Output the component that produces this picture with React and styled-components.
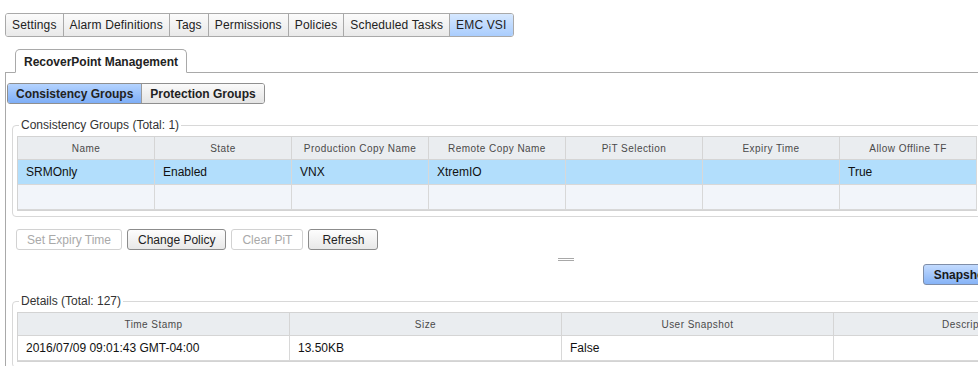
import React from 'react';
import styled, { createGlobalStyle, css } from 'styled-components';

const GlobalStyle = createGlobalStyle`
  html, body {
    margin: 0;
    padding: 0;
    background: #ffffff;
    overflow: hidden;
  }
  body {
    font-family: "Liberation Sans", Arial, sans-serif;
    font-size: 12px;
    color: #222;
  }
`;

const topTabs = ['Settings', 'Alarm Definitions', 'Tags', 'Permissions', 'Policies', 'Scheduled Tasks', 'EMC VSI'];

const groupColumns = ['Name', 'State', 'Production Copy Name', 'Remote Copy Name', 'PiT Selection', 'Expiry Time', 'Allow Offline TF'];
const groupRows = [
  { selected: true, cells: ['SRMOnly', 'Enabled', 'VNX', 'XtremIO', '', '', 'True'] },
  { selected: false, cells: ['', '', '', '', '', '', ''] },
];

const detailColumns = ['Time Stamp', 'Size', 'User Snapshot', 'Description'];
const detailRows = [
  { selected: false, cells: ['2016/07/09 09:01:43 GMT-04:00', '13.50KB', 'False', ''] },
];

const App = () => {
  return (
    <>
      <GlobalStyle />
      <Page>
        <TopBar>
          {topTabs.map((t) => (
            <TopTab key={t} active={t === 'EMC VSI'}>{t}</TopTab>
          ))}
        </TopBar>

        <TabStrip>
          <PanelTab>RecoverPoint Management</PanelTab>
        </TabStrip>

        <Panel>
          <Toggle>
            <ToggleButton active>Consistency Groups</ToggleButton>
            <ToggleButton>Protection Groups</ToggleButton>
          </Toggle>

          <Group gapTop={14}>
            <Legend>Consistency Groups (Total: 1)</Legend>
            <Grid cols={groupColumns.length} colWidth={137}>
              {groupColumns.map((c) => (
                <HeadCell key={c}>{c}</HeadCell>
              ))}
              {groupRows.map((row, i) =>
                row.cells.map((cell, j) => (
                  <Cell key={`${i}-${j}`} selected={row.selected} alt={!row.selected}>
                    {cell}
                  </Cell>
                ))
              )}
            </Grid>
          </Group>

          <ButtonRow>
            <Button disabled>Set Expiry Time</Button>
            <Button>Change Policy</Button>
            <Button disabled>Clear PiT</Button>
            <Button>Refresh</Button>
          </ButtonRow>

          <Splitter />

          <SnapshotBar>
            <BlueButton>Snapshots</BlueButton>
          </SnapshotBar>

          <Group wide gapTop={9}>
            <Legend>Details (Total: 127)</Legend>
            <Grid cols={detailColumns.length} colWidth={272}>
              {detailColumns.map((c) => (
                <HeadCell key={c}>{c}</HeadCell>
              ))}
              {detailRows.map((row, i) =>
                row.cells.map((cell, j) => (
                  <Cell key={`${i}-${j}`}>{cell}</Cell>
                ))
              )}
            </Grid>
          </Group>
        </Panel>
      </Page>
    </>
  );
};

const Page = styled.div`
  padding: 13px 0 0 5px;
  width: 1200px;
`;

const TopBar = styled.div`
  display: inline-flex;
  height: 24px;
  box-sizing: border-box;
  border: 1px solid #a9a9a9;
  border-radius: 3px;
  overflow: hidden;
`;

const TopTab = styled.div`
  display: flex;
  align-items: center;
  padding: 0 6px;
  font-size: 12px;
  letter-spacing: 0.15px;
  color: #222;
  background: linear-gradient(#fbfbfb, #e9e9e9);
  & + & {
    border-left: 1px solid #a9a9a9;
  }
  ${(p) => p.active && css`
    background: linear-gradient(#d6e8ff, #aacdfd);
  `}
`;

const TabStrip = styled.div`
  display: flex;
  margin-top: 12px;
  padding-left: 10px;
  border-bottom: 1px solid #a9a9a9;
`;

const PanelTab = styled.div`
  display: flex;
  align-items: center;
  height: 24px;
  box-sizing: border-box;
  margin-bottom: -1px;
  padding: 1px 8px 0 8px;
  font-size: 12px;
  font-weight: bold;
  color: #222;
  background: #fff;
  border: 1px solid #a9a9a9;
  border-bottom: 1px solid #fff;
  border-radius: 5px 5px 0 0;
`;

const Panel = styled.div`
  border-left: 1px solid #a9a9a9;
  padding: 10px 0 0 1px;
  min-height: 300px;
`;

const Toggle = styled.div`
  display: inline-flex;
  height: 21px;
  box-sizing: border-box;
  border: 1px solid #8f8f8f;
  border-radius: 3px;
  overflow: hidden;
`;

const ToggleButton = styled.div`
  display: flex;
  align-items: center;
  padding: 0 8px;
  font-size: 12px;
  font-weight: bold;
  color: #222;
  background: linear-gradient(#fafafa, #e4e4e4);
  & + & {
    border-left: 1px solid #9a9a9a;
  }
  ${(p) => p.active && css`
    background: linear-gradient(#b4d3ff, #7eaef6);
  `}
`;

const Group = styled.fieldset`
  margin: ${(p) => p.gapTop}px 0 0 5px;
  padding: 4px 4px 5px 4px;
  width: ${(p) => (p.wide ? '1120px' : '980px')};
  box-sizing: border-box;
  border: 1px solid #d8d8d8;
  border-radius: 4px;
  min-width: 0;
  overflow: hidden;
`;

const Legend = styled.legend`
  margin-left: 2px;
  padding: 0 2px;
  font-size: 12px;
  line-height: 14px;
  color: #333;
`;

const Grid = styled.div`
  display: grid;
  grid-template-columns: repeat(${(p) => p.cols}, ${(p) => p.colWidth}px);
  width: max-content;
  border: 1px solid #d3d3d3;
  border-right: none;
`;

const HeadCell = styled.div`
  height: 22px;
  display: flex;
  align-items: center;
  justify-content: center;
  font-size: 10px;
  letter-spacing: 0.45px;
  color: #4a4a4a;
  background: #eaedf0;
  border-right: 1px solid #d5d5d5;
  border-bottom: 1px solid #d5d5d5;
  white-space: nowrap;
  overflow: hidden;
`;

const Cell = styled.div`
  height: 24px;
  display: flex;
  align-items: center;
  padding-left: 8px;
  font-size: 12px;
  color: #111;
  background: #fff;
  border-right: 1px solid #d8d8d8;
  border-bottom: 1px solid #d8d8d8;
  white-space: nowrap;
  overflow: hidden;
  ${(p) => p.alt && css`
    background: #f2f5fa;
  `}
  ${(p) => p.selected && css`
    background: #b2defc;
  `}
`;

const ButtonRow = styled.div`
  display: flex;
  gap: 5px;
  margin-top: 12px;
  padding-left: 9px;
`;

const Button = styled.button`
  height: 21px;
  min-width: 70px;
  padding: 0 10px;
  font-family: "Liberation Sans", Arial, sans-serif;
  font-size: 12px;
  color: #222;
  background: linear-gradient(#fdfdfd, #e8e8e8);
  border: 1px solid #8c8c8c;
  border-radius: 3px;
  cursor: pointer;
  &:disabled {
    color: #a9a9a9;
    background: #fff;
    border-color: #d2d2d2;
    cursor: default;
  }
`;

const Splitter = styled.div`
  margin: 8px 0 0 551px;
  width: 16px;
  height: 1px;
  border-top: 1px solid #a8a8a8;
  border-bottom: 1px solid #a8a8a8;
`;

const SnapshotBar = styled.div`
  display: flex;
  justify-content: flex-end;
  margin: 3px 0 0 5px;
  width: 994px;
`;

const BlueButton = styled.button`
  height: 21px;
  padding: 0 10px;
  font-family: "Liberation Sans", Arial, sans-serif;
  font-size: 12px;
  font-weight: bold;
  color: #1a1a1a;
  background: linear-gradient(#c3dbff, #86b3f6);
  border: 1px solid #7f8ea8;
  border-radius: 3px;
  cursor: pointer;
`;

export default App;
